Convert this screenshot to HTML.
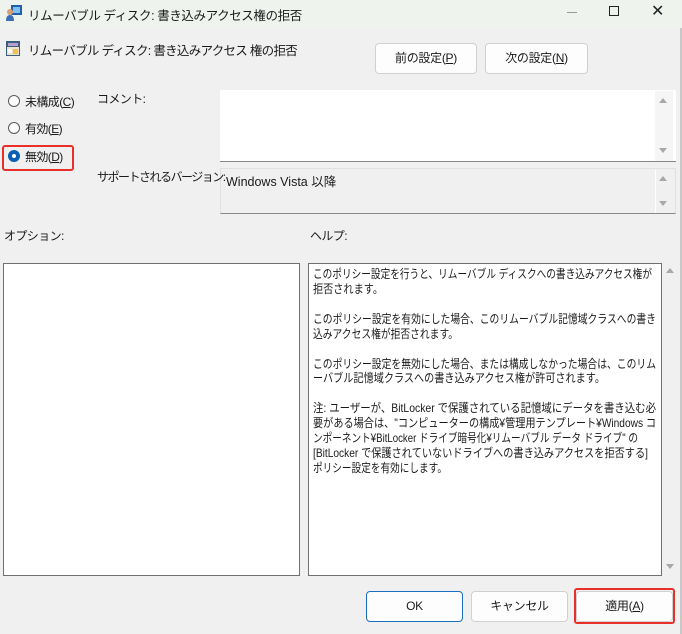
<!DOCTYPE html>
<html><head><meta charset="utf-8"><style>
*{box-sizing:border-box;margin:0;padding:0}
body{width:682px;height:634px;background:#f0f0f0;font-family:"Liberation Sans","Noto Sans CJK JP",sans-serif;font-size:12px;color:#1a1a1a;position:relative;overflow:hidden}
.a{position:absolute;white-space:nowrap}
.btn{position:absolute;background:#fdfdfd;border:1px solid #d0d0d0;border-radius:4px;text-align:center;font-size:12px;letter-spacing:-0.3px}
u{text-decoration:underline}
.rad{position:absolute;width:12px;height:12px;border:1px solid #5a5a5a;border-radius:50%;background:#fff}
.up,.dn{position:absolute;width:0;height:0;border-left:4px solid transparent;border-right:4px solid transparent}
.up{border-bottom:5px solid #a8a8a8}.dn{border-top:5px solid #a8a8a8}
.t{letter-spacing:-0.6px}
svg text{font-family:"Liberation Sans","Noto Sans CJK JP",sans-serif;font-size:12px;fill:#1a1a1a}
</style></head><body>
<div class="a" style="left:0;top:0;width:682px;height:28px;background:#eef3ee"></div>
<svg class="a" style="left:5px;top:4px" width="18" height="18"><rect x="6" y="1" width="11" height="10" fill="#1f5fb0"/><rect x="8" y="3" width="7" height="6" fill="#7fc0f0"/><circle cx="5" cy="8" r="3" fill="#d6a070"/><path d="M1 17 Q1 11 5 11 Q9 11 9 17Z" fill="#3a6fb5"/></svg>
<div class="a t" style="left:28px;top:5px;font-size:12.5px;letter-spacing:-0.4px">リムーバブル ディスク: 書き込みアクセス権の拒否</div>
<div class="a" style="left:567px;top:12px;width:10px;height:1px;background:#999"></div>
<div class="a" style="left:609px;top:6px;width:10px;height:10px;border:1px solid #222"></div>
<div class="a" style="left:651px;top:1px;font-size:16px;color:#222">✕</div>

<svg class="a" style="left:6px;top:41px" width="14" height="15"><rect x="0" y="0" width="14" height="15" fill="#3a5f7a"/><rect x="2" y="2" width="10" height="3" fill="#b8a0d0"/><rect x="1" y="6" width="12" height="8" fill="#e8e4d0"/><circle cx="4" cy="10" r="2" fill="#fff"/><rect x="7" y="8" width="5" height="5" fill="#f0c050"/></svg>
<div class="a" style="left:28px;top:40px;font-size:12.5px;letter-spacing:-0.7px">リムーバブル ディスク: 書き込みアクセス 権の拒否</div>
<div class="btn" style="left:375px;top:43px;width:102px;height:31px;line-height:29px">前の設定(<u>P</u>)</div>
<div class="btn" style="left:485px;top:43px;width:103px;height:31px;line-height:29px">次の設定(<u>N</u>)</div>

<div class="rad" style="left:8px;top:95px"></div>
<div class="a t" style="left:25px;top:93px">未構成(<u>C</u>)</div>
<div class="rad" style="left:8px;top:122px"></div>
<div class="a t" style="left:25px;top:120px">有効(<u>E</u>)</div>
<div class="a" style="left:2px;top:145px;width:72px;height:26px;border:2px solid #e8302a;border-radius:3px"></div>
<div class="rad" style="left:8px;top:150px;border:4px solid #0a5fb4;background:#fff"></div>
<div class="a t" style="left:25px;top:148px">無効(<u>D</u>)</div>

<div class="a t" style="left:97px;top:90px">コメント:</div>
<div class="a" style="left:220px;top:90px;width:456px;height:72px;background:#fff;border-bottom:1px solid #888"></div>
<div class="a" style="left:655px;top:91px;width:18px;height:70px;background:#f5f5f5"></div>
<div class="up" style="left:659px;top:98px"></div><div class="dn" style="left:659px;top:148px"></div>
<div class="a" style="left:220px;top:168px;width:456px;height:46px;background:#f0f0f0;border:1px solid #e0e0e0;border-bottom:1px solid #888"></div>
<div class="a t" style="left:97px;top:168px;letter-spacing:-1.5px">サポートされるバージョン:</div>
<div class="a" style="left:655px;top:170px;width:1px;height:43px;background:#fff"></div>
<div class="up" style="left:659px;top:176px"></div><div class="dn" style="left:659px;top:201px"></div>
<div class="a" style="left:226px;top:171px;font-size:12.5px">Windows Vista 以降</div>

<div class="a t" style="left:4px;top:227px">オプション:</div>
<div class="a t" style="left:310px;top:227px">ヘルプ:</div>
<div class="a" style="left:3px;top:263px;width:297px;height:313px;background:#fff;border:1px solid #707070"></div>
<div class="a" style="left:308px;top:263px;width:354px;height:313px;background:#fff;border:1px solid #707070"></div>
<svg class="a" style="left:0;top:0" width="682" height="634">
<text x="313" y="278" textLength="339" lengthAdjust="spacingAndGlyphs">このポリシー設定を行うと、リムーバブル ディスクへの書き込みアクセス権が</text>
<text x="313" y="293" textLength="70" lengthAdjust="spacingAndGlyphs">拒否されます。</text>
<text x="313" y="323" textLength="343" lengthAdjust="spacingAndGlyphs">このポリシー設定を有効にした場合、このリムーバブル記憶域クラスへの書き</text>
<text x="313" y="338" textLength="145" lengthAdjust="spacingAndGlyphs">込みアクセス権が拒否されます。</text>
<text x="313" y="368" textLength="343" lengthAdjust="spacingAndGlyphs">このポリシー設定を無効にした場合、または構成しなかった場合は、このリム</text>
<text x="313" y="382" textLength="292" lengthAdjust="spacingAndGlyphs">ーバブル記憶域クラスへの書き込みアクセス権が許可されます。</text>
<text x="313" y="412" textLength="343" lengthAdjust="spacingAndGlyphs">注: ユーザーが、BitLocker で保護されている記憶域にデータを書き込む必</text>
<text x="313" y="427" textLength="343" lengthAdjust="spacingAndGlyphs">要がある場合は、"コンピューターの構成¥管理用テンプレート¥Windows コ</text>
<text x="313" y="442" textLength="325" lengthAdjust="spacingAndGlyphs">ンポーネント¥BitLocker ドライブ暗号化¥リムーバブル データ ドライブ" の</text>
<text x="313" y="457" textLength="335" lengthAdjust="spacingAndGlyphs">[BitLocker で保護されていないドライブへの書き込みアクセスを拒否する]</text>
<text x="313" y="472" textLength="134" lengthAdjust="spacingAndGlyphs">ポリシー設定を有効にします。</text>
</svg>
<div class="up" style="left:666px;top:268px"></div><div class="dn" style="left:666px;top:564px"></div>

<div class="btn" style="left:366px;top:591px;width:97px;height:31px;line-height:29px;border-color:#1a6fc0">OK</div>
<div class="btn" style="left:471px;top:591px;width:97px;height:31px;line-height:29px">キャンセル</div>
<div class="btn" style="left:576px;top:591px;width:97px;height:31px;line-height:29px">適用(<u>A</u>)</div>
<div class="a" style="left:574px;top:588px;width:101px;height:36px;border:2px solid #e8302a;border-radius:3px"></div>
<div class="a" style="left:680px;top:28px;width:2px;height:606px;background:#c8c8c8"></div>
</body></html>
